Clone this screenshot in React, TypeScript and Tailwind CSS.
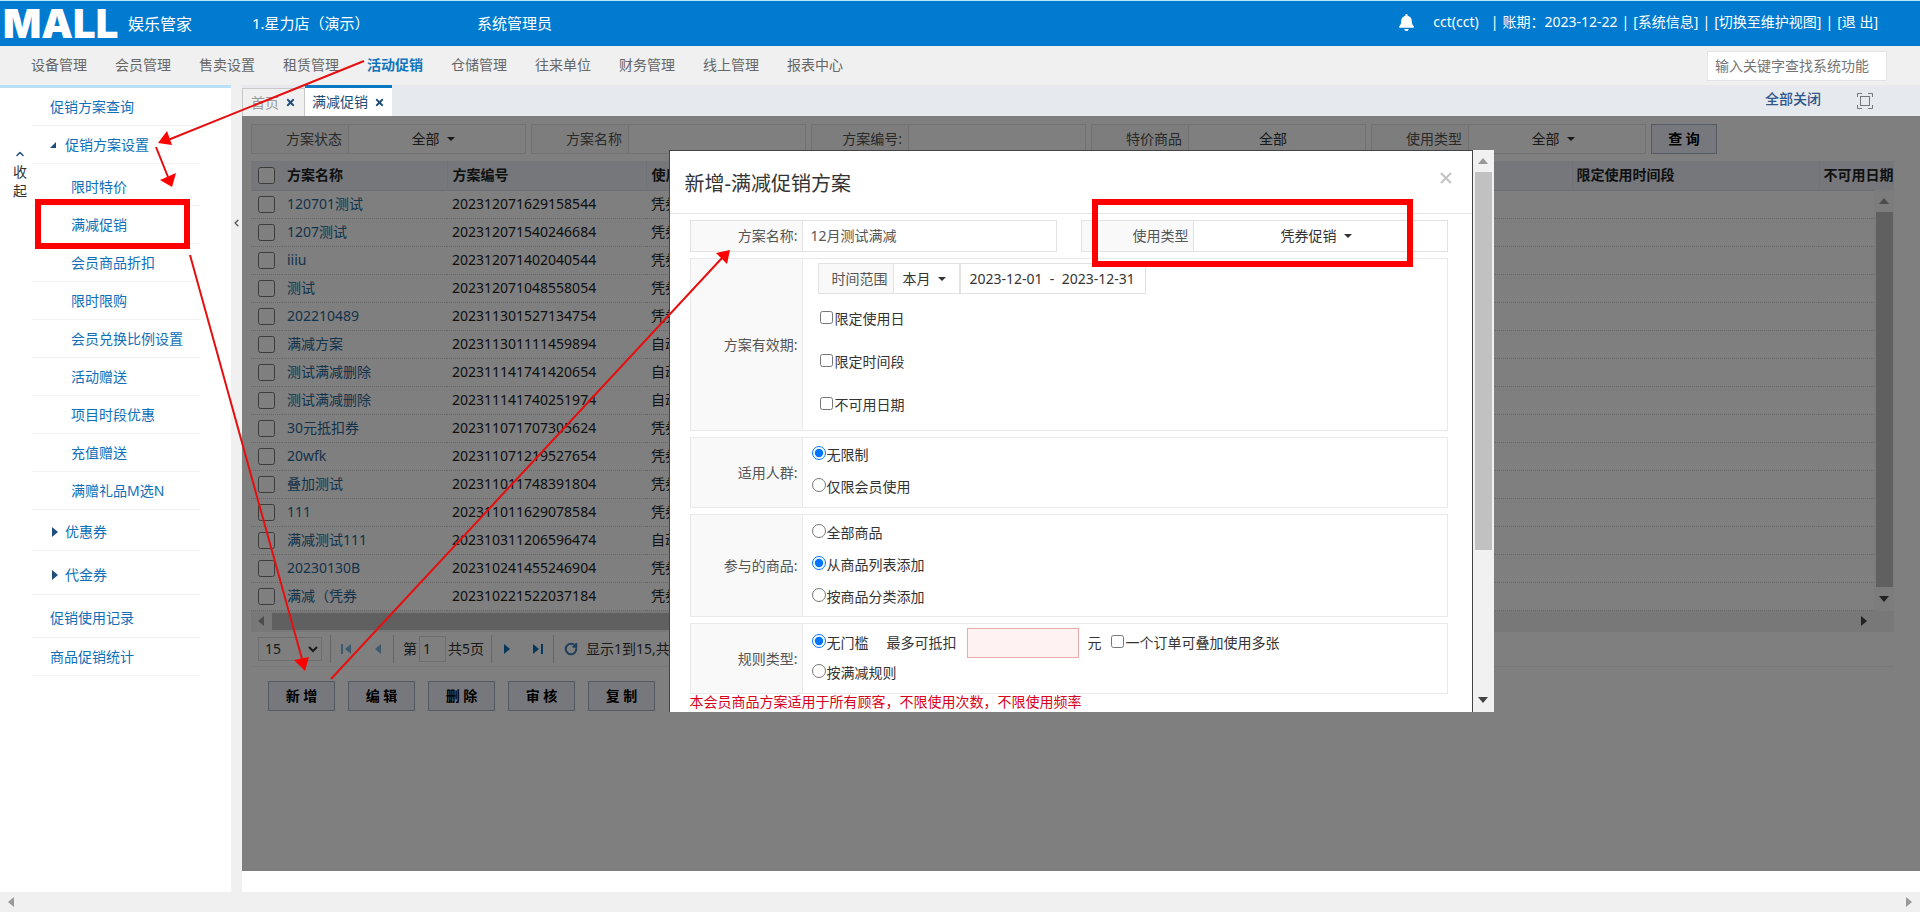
import React from 'react';
import { FaBell, FaTimes } from 'react-icons/fa';
import { ChevronLeft, ChevronUp, RotateCw } from 'lucide-react';

const NAV_ITEMS = [
  '设备管理',
  '会员管理',
  '售卖设置',
  '租赁管理',
  '活动促销',
  '仓储管理',
  '往来单位',
  '财务管理',
  '线上管理',
  '报表中心',
];

const SUB_MENU = [
  '限时特价',
  '满减促销',
  '会员商品折扣',
  '限时限购',
  '会员兑换比例设置',
  '活动赠送',
  '项目时段优惠',
  '充值赠送',
  '满赠礼品M选N',
];

const PLANS = [
  { name: '120701测试', code: '202312071629158544', type: '凭券促销' },
  { name: '1207测试', code: '202312071540246684', type: '凭券促销' },
  { name: 'iiiu', code: '202312071402040544', type: '凭券促销' },
  { name: '测试', code: '202312071048558054', type: '凭券促销' },
  { name: '202210489', code: '202311301527134754', type: '凭券促销' },
  { name: '满减方案', code: '202311301111459894', type: '自动促销' },
  { name: '测试满减删除', code: '202311141741420654', type: '自动促销' },
  { name: '测试满减删除', code: '202311141740251974', type: '自动促销' },
  { name: '30元抵扣券', code: '202311071707305624', type: '凭券促销' },
  { name: '20wfk', code: '202311071219527654', type: '凭券促销' },
  { name: '叠加测试', code: '202311011748391804', type: '凭券促销' },
  { name: '111', code: '202311011629078584', type: '凭券促销' },
  { name: '满减测试111', code: '202310311206596474', type: '自动促销' },
  { name: '20230130B', code: '202310241455246904', type: '凭券促销' },
  { name: '满减（凭券', code: '202310221522037184', type: '凭券促销' },
];

const ACTIONS = ['新 增', '编 辑', '删 除', '审 核', '复 制'];

type Direction = 'up' | 'down' | 'left' | 'right';

const TRIANGLES: Record<Direction, string> = {
  up: '0,8 5,2 10,8',
  down: '0,2 5,8 10,2',
  left: '8,0 2,5 8,10',
  right: '2,0 8,5 2,10',
};

const Triangle: React.FC<{ dir: Direction; className?: string }> = ({ dir, className = '' }) => (
  <svg viewBox="0 0 10 10" className={`size-[10px] shrink-0 fill-current ${className}`} aria-hidden="true">
    <polygon points={TRIANGLES[dir]} />
  </svg>
);

/* Select whose caret follows the centred value */
const CaretSelect: React.FC<{ label: string; value: string; caret?: boolean }> = ({
  label,
  value,
  caret = true,
}) => (
  <div className="flex items-center justify-center gap-[7px]">
    <select aria-label={label} className="appearance-none bg-transparent text-[#333]" defaultValue={value}>
      <option>{value}</option>
    </select>
    {caret && (
      <svg viewBox="0 0 8 4" className="h-1 w-2 shrink-0 fill-[#333]" aria-hidden="true">
        <polygon points="0,0 8,0 4,4" />
      </svg>
    )}
  </div>
);

const TopBar: React.FC = () => (
  <header className="flex h-[46px] items-center border-t border-[#b5e8fb] bg-[#007bd0] pr-[42px] text-white">
    <div className="w-[128px] shrink-0 pl-[3px] font-['Inter'] text-[40px] leading-[44px] font-black">MALL</div>
    <div className="w-[124px] text-base">娱乐管家</div>
    <div className="w-[225px] text-[15px]">1.星力店（演示）</div>
    <div className="text-[15px]">系统管理员</div>
    <div className="ml-auto flex items-center gap-1 pb-[3px] whitespace-nowrap">
      <FaBell className="mr-[14px] size-[17px]" />
      <span className="mr-2">cct(cct)</span>
      <span>|</span>
      <span>账期：2023-12-22</span>
      <span>|</span>
      <a href="#info">[系统信息]</a>
      <span>|</span>
      <a href="#view">[切换至维护视图]</a>
      <span>|</span>
      <a href="#logout">[退 出]</a>
    </div>
  </header>
);

const NavBar: React.FC = () => (
  <nav className="flex h-[39px] items-center bg-[#f0f0f0] pr-[33px] pl-[31px]">
    <div className="flex gap-7 pb-0.5">
      {NAV_ITEMS.map((item) => (
        <a
          key={item}
          href="#nav"
          className={item === '活动促销' ? 'font-bold text-[#0f75bd]' : 'text-[#666]'}
        >
          {item}
        </a>
      ))}
    </div>
    <input
      type="text"
      aria-label="查找系统功能"
      placeholder="输入关键字查找系统功能"
      className="ml-auto h-[30px] w-[180px] border border-[#e4e4e4] bg-white px-[7px] placeholder:text-[#757575]"
    />
  </nav>
);

const MENU_ROW = 'flex h-[38px] items-center border-b border-[#f2f2f2]';

const SideBar: React.FC = () => (
  <aside className="flex w-[231px] shrink-0 border-t-[3px] border-[#b9e0f7] bg-white">
    <button type="button" className="flex h-[120px] w-8 flex-col items-center pt-[60px] pl-2 text-[#333]">
      <ChevronUp className="size-3 text-[#1f4e79]" strokeWidth={3} />
      <span className="mt-0.5 leading-[19px]">
        收
        <br />起
      </span>
    </button>
    <div className="w-[168px] text-[#0f6fb8]">
      <a href="#query" className={`${MENU_ROW} pl-[18px]`}>
        促销方案查询
      </a>
      <a href="#setup" className={`${MENU_ROW} pl-[18px]`}>
        <svg viewBox="0 0 6 6" className="mr-[9px] size-1.5 fill-[#1f4e79]">
          <polygon points="6,0 6,6 0,6" />
        </svg>
        促销方案设置
      </a>
      <ul className="pt-1 pb-[3px]">
        {SUB_MENU.map((item) => (
          <li key={item}>
            <a href="#sub" className={`${MENU_ROW} pl-[39px]`}>
              {item}
            </a>
          </li>
        ))}
      </ul>
      <a href="#coupon" className={`${MENU_ROW} pl-[18px]`}>
        <Triangle dir="right" className="mr-[5px] text-[#1f4e79]" />
        优惠券
      </a>
      <a href="#voucher" className={`${MENU_ROW} box-content pt-[5px] pl-[18px]`}>
        <Triangle dir="right" className="mr-[5px] text-[#1f4e79]" />
        代金券
      </a>
      <a href="#records" className={`${MENU_ROW} box-content pt-1 pl-[18px]`}>
        促销使用记录
      </a>
      <a href="#stats" className={`${MENU_ROW} pl-[18px]`}>
        商品促销统计
      </a>
    </div>
  </aside>
);

const TabStrip: React.FC = () => (
  <div className="flex h-[31px] items-stretch bg-[#e6e9ee]">
    <div className="mt-[3px] flex w-[63px] items-center justify-center gap-1.5 border border-b-0 border-[#c8c8c8] bg-[#f0f0f0] text-[#999]">
      首页
      <button type="button" aria-label="关闭首页">
        <FaTimes className="size-[11px] text-[#1f4e79]" />
      </button>
    </div>
    <div className="flex w-[87px] items-center justify-center gap-1.5 border-t-[3px] border-[#0b78c4] bg-white text-[#1f4e79]">
      满减促销
      <button type="button" aria-label="关闭满减促销">
        <FaTimes className="size-[11px]" />
      </button>
    </div>
    <button type="button" className="mr-9 ml-auto pb-[3px] font-medium text-[#2f5589]">
      全部关闭
    </button>
    <button type="button" aria-label="全屏" className="mr-[47px]">
      <svg viewBox="0 0 16 16" className="size-4 fill-none stroke-[#777]" strokeWidth="1">
        <path d="M.5 4V.5H5M11 .5h4.5V4M15.5 12v3.5H11M5 15.5H.5V12" />
        <rect x="3.5" y="3.5" width="9" height="9" />
      </svg>
    </button>
  </div>
);

const FilterField: React.FC<{ label: string; children: React.ReactNode }> = ({ label, children }) => (
  <div className="flex h-[30px] w-[275px] border border-[#e5e5e5]">
    <div className="flex w-[97px] items-center justify-end border-r border-[#e5e5e5] bg-[#fafafa] pr-[6px] text-[#555]">
      {label}
    </div>
    <div className="flex flex-1 items-center justify-center pr-2">{children}</div>
  </div>
);

const FilterBar: React.FC = () => (
  <div className="flex gap-[5px]">
    <FilterField label="方案状态">
      <CaretSelect label="方案状态" value="全部" />
    </FilterField>
    <FilterField label="方案名称">
      <input type="text" aria-label="方案名称" className="w-full px-2 outline-none" />
    </FilterField>
    <FilterField label="方案编号:">
      <input type="text" aria-label="方案编号" className="w-full px-2 outline-none" />
    </FilterField>
    <FilterField label="特价商品">
      <CaretSelect label="特价商品" value="全部" caret={false} />
    </FilterField>
    <FilterField label="使用类型">
      <CaretSelect label="使用类型" value="全部" />
    </FilterField>
    <button type="button" className="h-[30px] w-[66px] border border-[#a9b4c8] bg-[#edf0fa] font-bold text-black">
      查 询
    </button>
  </div>
);

const PlanTable: React.FC = () => (
  <div className="mt-[7px] mr-[26px]">
    <div className="relative">
      <table className="w-full table-fixed border-collapse whitespace-nowrap text-left text-[#222]">
        <colgroup>
          <col className="w-[31px]" />
          <col className="w-[165px]" />
          <col className="w-[199px]" />
          <col className="w-[120px]" />
          <col />
          <col className="w-[247px]" />
          <col className="w-[75px]" />
        </colgroup>
        <thead className="bg-[#ebeef6]">
          <tr className="h-[29px] border-b border-[#d5dbe6]">
            <th className="p-0">
              <input type="checkbox" aria-label="全选" className="ml-[7px] block size-[17px]" />
            </th>
            <th className="border-r border-[#e0e4ee] px-[5px] py-0">方案名称</th>
            <th className="border-r border-[#e0e4ee] px-[5px] py-0">方案编号</th>
            <th className="px-[5px] py-0">使用类型</th>
            <th />
            <th className="border-x border-[#e0e4ee] px-1 py-0">限定使用时间段</th>
            <th className="px-1 py-0">不可用日期</th>
          </tr>
        </thead>
        <tbody>
          {PLANS.map((plan) => (
            <tr key={plan.code} className="h-[28px] border-b border-dotted border-[#ccc]">
              <td className="p-0">
                <input type="checkbox" aria-label={plan.code} className="ml-[7px] block size-[17px]" />
              </td>
              <td className="px-[5px] py-0">
                <a href="#plan" className="text-[#2a6496]">
                  {plan.name}
                </a>
              </td>
              <td className="px-[5px] py-0">{plan.code}</td>
              <td className="px-[5px] py-0">{plan.type}</td>
              <td />
              <td />
              <td />
            </tr>
          ))}
        </tbody>
      </table>
      <div className="absolute top-[29px] right-0 bottom-0 flex w-5 flex-col items-center bg-[#f8f8f8]">
        <Triangle dir="up" className="my-[6px] text-[#999]" />
        <div className="w-[17px] flex-1 bg-[#c1c1c1]" />
        <Triangle dir="down" className="my-[7px] text-[#444]" />
      </div>
    </div>
    <div className="flex h-[21px] items-center bg-[#f0f0f0] pr-[25px] pl-[5px]">
      <Triangle dir="left" className="mr-[6px] text-[#999]" />
      <div className="h-[17px] w-3/4 bg-[#c1c1c1]" />
      <Triangle dir="right" className="ml-auto text-[#444]" />
    </div>
  </div>
);

const Pager: React.FC = () => (
  <div className="mr-[26px] flex h-[35px] items-center border-b border-[#f0f0f0] pl-[7px] text-[#333]">
    <select aria-label="每页条数" className="h-6 w-[64px] border border-[#ddd] bg-white pl-0.5">
      <option>15</option>
    </select>
    <div className="ml-2 flex h-7 w-[64px] items-center justify-around border-x border-[#ccc] text-[#7db4dc]">
      <button type="button" aria-label="首页" className="flex">
        <span className="h-[10px] w-[2px] bg-current" />
        <Triangle dir="left" />
      </button>
      <button type="button" aria-label="上一页">
        <Triangle dir="left" />
      </button>
    </div>
    <label className="ml-[9px] flex items-center gap-0.5">
      第
      <input type="text" defaultValue="1" className="h-[26px] w-[27px] border border-[#ddd] pl-[3px]" />
    </label>
    <span className="ml-0.5 w-[43px]">共5页</span>
    <div className="flex h-7 w-[63px] items-center justify-around border-x border-[#ccc] text-[#0c6cb4]">
      <button type="button" aria-label="下一页">
        <Triangle dir="right" />
      </button>
      <button type="button" aria-label="末页" className="flex">
        <Triangle dir="right" />
        <span className="h-[10px] w-[2px] bg-current" />
      </button>
    </div>
    <button type="button" aria-label="刷新" className="mr-2 ml-[10px]">
      <RotateCw className="size-[14px] text-[#3f7fb5]" strokeWidth={3.5} />
    </button>
    <span>显示1到15,共71记录</span>
  </div>
);

const Choice: React.FC<{
  type: 'radio' | 'checkbox';
  name?: string;
  label: string;
  checked?: boolean;
}> = ({ type, name, label, checked }) => (
  <label className="flex items-center leading-5">
    <input
      type={type}
      name={name}
      defaultChecked={checked}
      className={type === 'radio' ? 'mr-[1px] mb-1 size-[14px]' : 'mr-[2px] mb-1 size-[13px]'}
    />
    {label}
  </label>
);

const FormBlock: React.FC<{ label: string; className?: string; children: React.ReactNode }> = ({
  label,
  className = '',
  children,
}) => (
  <div className="mt-1.5 flex border border-[#e9e9e9]">
    <div className="flex w-28 shrink-0 items-center justify-end border-r border-[#e9e9e9] bg-[#f9f9f9] pr-1 text-[#555]">
      {label}
    </div>
    <div className={`flex flex-1 flex-col ${className}`}>{children}</div>
  </div>
);

const PlanDialog: React.FC = () => (
  <div role="dialog" aria-label="新增-满减促销方案" className="flex h-[562px] w-[825px] overflow-hidden bg-white">
    <div className="flex-1 border-x border-t border-[#444] text-[#333]">
      <div className="flex h-[63px] items-center border-b border-[#e5e5e5] pr-5 pl-[15px]">
        <h4 className="flex-1 pt-1 text-[20px]">新增-满减促销方案</h4>
        <button type="button" aria-label="关闭" className="mb-2">
          <svg viewBox="0 0 12 12" className="size-3 stroke-[#c4c4c4]" strokeWidth="2.2">
            <path d="M1 1l10 10M11 1L1 11" />
          </svg>
        </button>
      </div>
      <div className="pt-[6px] pr-[24px] pl-5">
        <div className="flex justify-between">
          <label className="flex h-8 w-[367px] border border-[#e2e2e2]">
            <span className="flex w-28 items-center justify-end border-r border-[#e2e2e2] bg-[#f9f9f9] pr-1 text-[#555]">
              方案名称:
            </span>
            <input type="text" defaultValue="12月测试满减" className="min-w-0 flex-1 px-2 text-[#555]" />
          </label>
          <div className="flex h-8 w-[367px] border border-[#e2e2e2]">
            <span className="flex w-28 items-center justify-end border-r border-[#e2e2e2] bg-[#f9f9f9] pr-1 text-[#555]">
              使用类型
            </span>
            <div className="flex flex-1 items-center justify-center pr-2">
              <CaretSelect label="使用类型" value="凭券促销" />
            </div>
          </div>
        </div>

        <FormBlock label="方案有效期:" className="gap-[23px] px-[15px] pt-1 pb-[15px]">
          <div className="flex h-[31px] w-[328px] border border-[#e2e2e2]">
            <span className="flex w-[75px] items-center justify-end border-r border-[#e2e2e2] bg-[#f9f9f9] pr-[5px] text-[#555]">
              时间范围
            </span>
            <div className="flex w-[67px] items-center justify-center border-r-2 border-[#e2e2e2] pr-1">
              <CaretSelect label="时间范围" value="本月" />
            </div>
            <input
              type="text"
              aria-label="日期"
              defaultValue="2023-12-01  -  2023-12-31"
              className="min-w-0 flex-1 pl-[9px]"
            />
          </div>
          <div className="-mt-2 flex flex-col gap-[23px] pl-[2px]">
            <Choice type="checkbox" label="限定使用日" />
            <Choice type="checkbox" label="限定时间段" />
            <Choice type="checkbox" label="不可用日期" />
          </div>
        </FormBlock>

        <FormBlock label="适用人群:" className="gap-3 px-[9px] pt-[7px] pb-[10px]">
          <Choice type="radio" name="crowd" label="无限制" checked />
          <Choice type="radio" name="crowd" label="仅限会员使用" />
        </FormBlock>

        <FormBlock label="参与的商品:" className="gap-3 px-[9px] pt-2 pb-[9px]">
          <Choice type="radio" name="goods" label="全部商品" />
          <Choice type="radio" name="goods" label="从商品列表添加" checked />
          <Choice type="radio" name="goods" label="按商品分类添加" />
        </FormBlock>

        <FormBlock label="规则类型:" className="gap-[5px] px-[9px] pt-1 pb-[10px]">
          <div className="flex items-center">
            <Choice type="radio" name="rule" label="无门槛" checked />
            <label className="ml-[18px] flex items-center gap-[10px]">
              最多可抵扣
              <input type="text" className="h-[30px] w-[112px] border border-[#eea9a9] bg-[#fff2f2] px-2" />
            </label>
            <span className="mx-[9px]">元</span>
            <Choice type="checkbox" label="一个订单可叠加使用多张" />
          </div>
          <Choice type="radio" name="rule" label="按满减规则" />
        </FormBlock>

        <p className="leading-4 text-[#d9001b]">本会员商品方案适用于所有顾客，不限使用次数，不限使用频率</p>
      </div>
    </div>
    <div className="flex w-[21px] flex-col items-center bg-[#f1f1f1]">
      <Triangle dir="up" className="my-[6px] text-[#999]" />
      <div className="h-[378px] w-[17px] bg-[#c1c1c1]" />
      <Triangle dir="down" className="mt-auto mb-[7px] text-[#444]" />
    </div>
  </div>
);

/* Walkthrough marks drawn over the page */
const GuideMarks: React.FC = () => (
  <svg
    className="pointer-events-none absolute top-0 left-0"
    width="1920"
    height="912"
    viewBox="0 0 1920 912"
    aria-hidden="true"
  >
    <g fill="none" stroke="#f00" strokeWidth="6">
      <rect x="38" y="202" width="149" height="44" />
      <rect x="1095" y="202" width="315" height="62" />
    </g>
    <g stroke="#e60f0f" strokeWidth="2">
      <path d="M364 61L168 140M156 147L168 177M190 255L302 659M331 679L722 258" />
    </g>
    <g fill="#f00">
      <polygon points="158,143 167,131 172,145" />
      <polygon points="172,187 160,180 176,173" />
      <polygon points="305,671 294,660 309,657" />
      <polygon points="730,250 716,253 727,264" />
    </g>
  </svg>
);

export default function App() {
  return (
    <div className="relative flex min-h-screen flex-col overflow-hidden bg-white font-['Noto_Sans','Noto_Sans_CJK_SC',sans-serif] text-sm">
      <TopBar />
      <NavBar />
      <div className="flex flex-1 bg-[#f0f0f0]">
        <SideBar />
        <button type="button" aria-label="收起菜单" className="flex w-[11px] shrink-0 justify-center bg-[#f0f0f0] pt-[132px]">
          <ChevronLeft className="size-3 text-[#555]" strokeWidth={3} />
        </button>
        <div className="flex min-w-0 flex-1 flex-col">
          <TabStrip />
          <main className="relative flex-1 bg-white pt-2 pl-[9px]">
            <FilterBar />
            <PlanTable />
            <Pager />
            <div className="mt-[14px] flex gap-[13px] pl-[17px]">
              {ACTIONS.map((action) => (
                <button
                  key={action}
                  type="button"
                  className="h-[30px] w-[67px] border border-[#a9b4c8] bg-[#edf0fa] font-bold text-black"
                >
                  {action}
                </button>
              ))}
            </div>
            <div className="absolute inset-0 flex items-start justify-center bg-black/50 pt-[34px]">
              <PlanDialog />
            </div>
          </main>
          <div className="h-[21px] bg-white" />
        </div>
      </div>
      <div className="flex h-5 items-center justify-between bg-[#f0f0f0] px-1.5 text-[#999]">
        <Triangle dir="left" />
        <Triangle dir="right" />
      </div>
      <GuideMarks />
    </div>
  );
}
